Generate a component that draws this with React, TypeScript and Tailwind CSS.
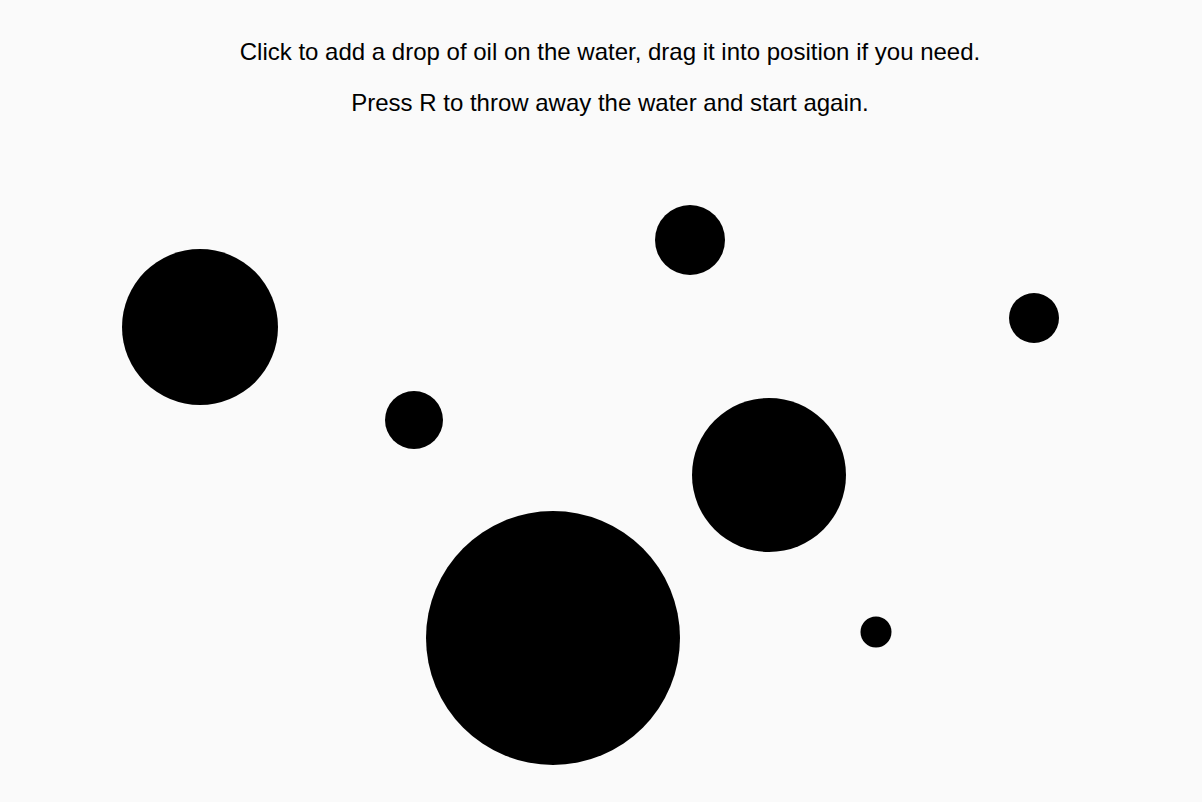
const drops = [
  { x: 200, y: 327, r: 78 },
  { x: 690, y: 240, r: 35 },
  { x: 1034, y: 318, r: 25 },
  { x: 414, y: 420, r: 29 },
  { x: 769, y: 475, r: 77 },
  { x: 553, y: 638, r: 127 },
  { x: 876, y: 632, r: 15.5 },
];

const App = () => {
  return (
    <div className="relative w-[1202px] h-[802px] overflow-hidden bg-[#fafafa] font-['Liberation_Sans',Arial,sans-serif] text-black">
      <div className="flex flex-col items-center pt-[38px] pl-[18px] gap-[24px] text-[24px] leading-[27px]">
        <p>Click to add a drop of oil on the water, drag it into position if you need.</p>
        <p>Press R to throw away the water and start again.</p>
      </div>

      {/* oil drops sit on a free canvas */}
      <svg className="absolute inset-0" width={1202} height={802}>
        {drops.map((d, i) => (
          <circle key={i} cx={d.x} cy={d.y} r={d.r} fill="#000" />
        ))}
      </svg>
    </div>
  );
};

export default App;
